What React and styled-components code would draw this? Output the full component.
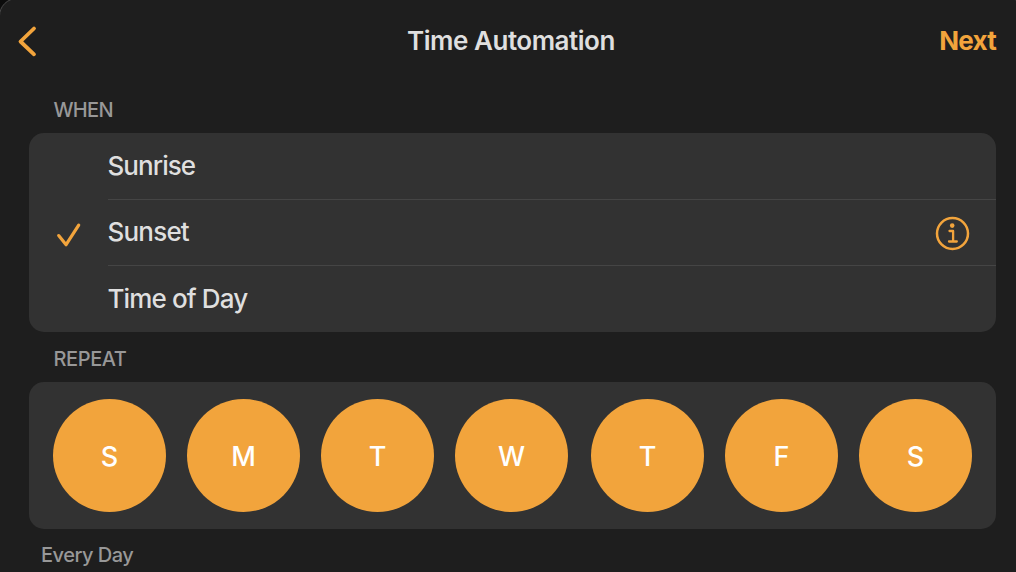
import React from "react";
import styled, { createGlobalStyle } from "styled-components";

const accent = "#f2a43c";

const GlobalStyle = createGlobalStyle`
  * { box-sizing: border-box; }
  html, body { margin: 0; background: #0c0c0c; overflow: hidden; }
  body { font-family: Inter, "Liberation Sans", sans-serif; -webkit-font-smoothing: antialiased; }
  button { font: inherit; border: 0; padding: 0; background: none; }
`;

const Viewport = styled.div`
  width: 1016px;
  height: 572px;
  overflow: hidden;
`;

const Sheet = styled.main`
  width: 1028px;
  height: 600px;
  margin: -2px 0 0 -1px;
  padding: 2px 31px 0 29px;
  background: #1e1e1e;
  border: 1px solid #4a4a4a;
  border-radius: 18px;
`;

const Header = styled.header`
  display: grid;
  grid-template-columns: 111px 1fr 100px;
  align-items: center;
  height: 80px;
  margin: 0 -1px 0 -14px;
`;

const BackButton = styled.button`
  display: flex;
  color: ${accent};
`;

const Title = styled.h1`
  margin: 0;
  text-align: center;
  font-size: 26px;
  line-height: 32px;
  font-weight: 600;
  letter-spacing: -0.48px;
  color: #dfdfdf;
`;

const NextButton = styled.button`
  text-align: right;
  font-size: 26px;
  line-height: 32px;
  font-weight: 700;
  letter-spacing: -0.75px;
  color: ${accent};
`;

const SectionLabel = styled.h2`
  margin: 0;
  padding: ${(p) => (p.$first ? "16px 0 0 24.5px" : "13.5px 0 0 24.5px")};
  height: ${(p) => (p.$first ? "52px" : "50px")};
  font-size: 20px;
  line-height: 26px;
  font-weight: 450;
  letter-spacing: ${(p) => (p.$first ? "-0.7px" : "-0.4px")};
  color: #989898;
`;

const Card = styled.section`
  width: 967px;
  border-radius: 15px;
  background: #323232;
  overflow: hidden;
`;

const Options = styled(Card)`
  height: 199px;
`;

const OptionRow = styled.div`
  display: flex;
  height: 66px;

  &:first-child {
    height: 67px;
  }
`;

const CheckSlot = styled.div`
  display: flex;
  flex: 0 0 79px;
  align-items: center;
  padding: 4px 0 0 27px;
`;

const OptionBody = styled.div`
  display: flex;
  flex: 1;
  align-items: center;
  justify-content: space-between;
  padding: 0 26px 1px 0;
  border-bottom: ${(p) => (p.$last ? "0" : "1px solid #454545")};
`;

const OptionText = styled.span`
  margin-left: -0.5px;
  font-size: 26px;
  line-height: 32px;
  font-weight: 450;
  letter-spacing: ${(p) => p.$tracking};
  color: #dfdfdf;
`;

const InfoButton = styled.button`
  display: flex;
  margin-top: 2px;
`;

const Days = styled(Card)`
  display: flex;
  gap: 21px;
  height: 147px;
  padding: 17px 24px;
`;

const Day = styled.button`
  flex: 0 0 113px;
  height: 113px;
  padding-top: 2px;
  border-radius: 50%;
  background: ${accent};
  color: #fff;
  font-size: 27px;
  line-height: 32px;
  font-weight: 500;

  &:nth-child(5) {
    margin-left: 2px;
  }
`;

const Footnote = styled.p`
  margin: 13px 0 0 12px;
  font-size: 20px;
  line-height: 26px;
  font-weight: 450;
  letter-spacing: -0.5px;
  color: #989898;
`;

const BackIcon = () => (
  <svg width="24" height="34" viewBox="0 0 24 34" fill="none" stroke="currentColor" strokeWidth="3.8" strokeLinecap="round" strokeLinejoin="round">
    <path d="M19 4.5 5.5 17.5 19 30.3" />
  </svg>
);

const CheckIcon = () => (
  <svg width="26" height="26" viewBox="0 0 26 26" fill="none" stroke={accent} strokeWidth="3.2" strokeLinecap="round" strokeLinejoin="round">
    <path d="M2.7 13.6 10.1 22.7 22.7 3.2" />
  </svg>
);

const InfoIcon = () => (
  <svg width="35" height="35" viewBox="0 0 35 35" fill="none" stroke={accent}>
    <circle cx="17.5" cy="17.5" r="15.5" strokeWidth="2.5" />
    <circle cx="17.2" cy="9.6" r="2.3" fill={accent} stroke="none" />
    <path d="M14.5 15h3.6v10.4M14 25.5h7.8" strokeWidth="2.3" strokeLinecap="round" strokeLinejoin="round" />
  </svg>
);

const options = [
  { name: "Sunrise", tracking: "-0.95px" },
  { name: "Sunset", tracking: "-0.8px", selected: true },
  { name: "Time of Day", tracking: "-0.88px" },
];

const days = ["S", "M", "T", "W", "T", "F", "S"];

export default function App() {
  return (
    <Viewport>
      <GlobalStyle />
      <Sheet>
        <Header>
          <BackButton aria-label="Back"><BackIcon /></BackButton>
          <Title>Time Automation</Title>
          <NextButton>Next</NextButton>
        </Header>
        <SectionLabel $first>WHEN</SectionLabel>
        <Options>
          {options.map((o, i) => (
            <OptionRow key={o.name}>
              <CheckSlot>{o.selected && <CheckIcon />}</CheckSlot>
              <OptionBody $last={i === options.length - 1}>
                <OptionText $tracking={o.tracking}>{o.name}</OptionText>
                {o.selected && <InfoButton aria-label="Details"><InfoIcon /></InfoButton>}
              </OptionBody>
            </OptionRow>
          ))}
        </Options>
        <SectionLabel>REPEAT</SectionLabel>
        <Days>
          {days.map((d, i) => <Day key={i}>{d}</Day>)}
        </Days>
        <Footnote>Every Day</Footnote>
      </Sheet>
    </Viewport>
  );
}
